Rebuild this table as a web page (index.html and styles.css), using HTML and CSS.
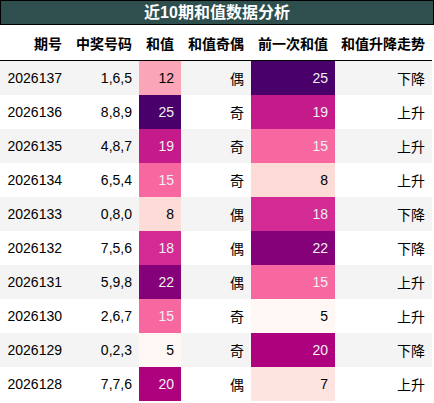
FILE: index.html
```html
<!DOCTYPE html>
<html lang="zh">
<head>
    <meta charset="UTF-8">
    <meta name="viewport" content="width=device-width, initial-scale=1.0">
    <title>近10期和值数据分析</title>
    <link rel="stylesheet" href="styles.css">
</head>
<body>
    <div class="report">
        <div class="report-title">近10期和值数据分析</div>

        <table class="sum-table">
            <colgroup>
                <col class="col-issue">
                <col class="col-nums">
                <col class="col-sum">
                <col class="col-parity">
                <col class="col-prev">
                <col class="col-trend">
            </colgroup>
            <thead>
                <tr>
                    <th>期号</th>
                    <th>中奖号码</th>
                    <th>和值</th>
                    <th>和值奇偶</th>
                    <th>前一次和值</th>
                    <th>和值升降走势</th>
                </tr>
            </thead>
            <tbody>
                <tr>
                    <td>2026137</td><td>1,6,5</td>
                    <td class="g35">12</td><td class="cjk">偶</td>
                    <td class="g100 light">25</td><td class="cjk">下降</td>
                </tr>
                <tr>
                    <td>2026136</td><td>8,8,9</td>
                    <td class="g100 light">25</td><td class="cjk">奇</td>
                    <td class="g70 light">19</td><td class="cjk">上升</td>
                </tr>
                <tr>
                    <td>2026135</td><td>4,8,7</td>
                    <td class="g70 light">19</td><td class="cjk">奇</td>
                    <td class="g50 light">15</td><td class="cjk">上升</td>
                </tr>
                <tr>
                    <td>2026134</td><td>6,5,4</td>
                    <td class="g50 light">15</td><td class="cjk">奇</td>
                    <td class="g15">8</td><td class="cjk">上升</td>
                </tr>
                <tr>
                    <td>2026133</td><td>0,8,0</td>
                    <td class="g15">8</td><td class="cjk">偶</td>
                    <td class="g65 light">18</td><td class="cjk">下降</td>
                </tr>
                <tr>
                    <td>2026132</td><td>7,5,6</td>
                    <td class="g65 light">18</td><td class="cjk">偶</td>
                    <td class="g85 light">22</td><td class="cjk">下降</td>
                </tr>
                <tr>
                    <td>2026131</td><td>5,9,8</td>
                    <td class="g85 light">22</td><td class="cjk">偶</td>
                    <td class="g50 light">15</td><td class="cjk">上升</td>
                </tr>
                <tr>
                    <td>2026130</td><td>2,6,7</td>
                    <td class="g50 light">15</td><td class="cjk">奇</td>
                    <td class="g0">5</td><td class="cjk">上升</td>
                </tr>
                <tr>
                    <td>2026129</td><td>0,2,3</td>
                    <td class="g0">5</td><td class="cjk">奇</td>
                    <td class="g75 light">20</td><td class="cjk">下降</td>
                </tr>
                <tr>
                    <td>2026128</td><td>7,7,6</td>
                    <td class="g75 light">20</td><td class="cjk">偶</td>
                    <td class="g10">7</td><td class="cjk">上升</td>
                </tr>
            </tbody>
        </table>
    </div>
</body>
</html>
```

FILE: styles.css
```css
body {
    margin: 0;
    background-color: white;
    font-family: "Liberation Sans", "Noto Sans CJK SC", sans-serif;
    color: #000;
}

.report {
    width: 434px;
}

.report-title {
    height: 23px;
    line-height: 23px;
    background-color: #2f4f4f;
    border: 1px solid #000;
    color: white;
    font-size: 16px;
    font-weight: bold;
    text-align: center;
}

.sum-table {
    width: 432px;
    border-collapse: collapse;
    table-layout: fixed;
    font-size: 14px;
}

.col-issue { width: 69px; }
.col-nums { width: 70px; }
.col-sum { width: 42px; }
.col-parity { width: 70px; }
.col-prev { width: 84px; }
.col-trend { width: 97px; }

.sum-table th,
.sum-table td {
    padding: 0 7px 0 0;
    text-align: right;
    white-space: nowrap;
}

.sum-table th {
    height: 35px;
    font-family: "Noto Sans CJK SC", sans-serif;
    font-weight: bold;
    border-bottom: 1px solid #000;
}

.sum-table td {
    height: 34px;
}

.sum-table tbody tr:nth-child(odd) {
    background-color: #f4f4f4;
}

.sum-table td.cjk {
    font-family: "Noto Sans CJK SC", sans-serif;
}

/* RdPu gradient steps */
.g0 { background-color: #fff7f3; }
.g10 { background-color: #fde4e1; }
.g15 { background-color: #fddbd7; }
.g35 { background-color: #faa5b8; }
.g50 { background-color: #f768a1; }
.g65 { background-color: #d32a93; }
.g70 { background-color: #c51b8a; }
.g75 { background-color: #ae017e; }
.g85 { background-color: #840179; }
.g100 { background-color: #49006a; }

.light {
    color: #f1f1f1;
}
```
